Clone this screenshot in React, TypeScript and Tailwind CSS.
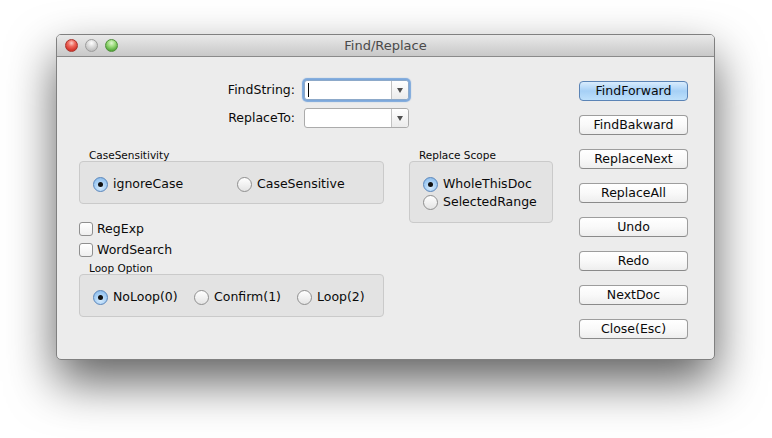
import React from "react"

const font = { fontFamily: '"DejaVu Sans", "Liberation Sans", sans-serif' }

// 창 제목 표시줄의 신호등 버튼
function TrafficLights() {
  return (
    <div className="flex items-center gap-[7px] pl-[8px]">
      <span className="h-[13px] w-[13px] rounded-full border border-[#a8332c] bg-[radial-gradient(circle_at_50%_28%,#fbd0cb_0%,#f06b5f_35%,#d4332a_75%,#e2594f_100%)]" />
      <span className="h-[13px] w-[13px] rounded-full border border-[#9c9c9c] bg-[radial-gradient(circle_at_50%_28%,#ffffff_0%,#dcdcdc_40%,#bdbdbd_80%,#d6d6d6_100%)]" />
      <span className="h-[13px] w-[13px] rounded-full border border-[#4f8f3a] bg-[radial-gradient(circle_at_50%_28%,#e0f6d2_0%,#9bdc7a_38%,#55a83b_78%,#7cc565_100%)]" />
    </div>
  )
}

function ComboBox({ focused = false }: { focused?: boolean }) {
  return (
    <div
      className={
        focused
          ? "flex h-[20px] w-[105px] rounded-[3px] border border-[#8da9c9] bg-white shadow-[0_0_1px_2px_rgba(95,150,215,0.8)]"
          : "flex h-[20px] w-[105px] rounded-[3px] border border-[#ababab] bg-white"
      }
    >
      <div className="flex flex-1 items-center pl-[3px]">
        {focused && <span className="h-[14px] w-px bg-black" />}
      </div>
      <div className="flex w-[17px] items-center justify-center rounded-r-[3px] border-l border-[#c2c2c2] bg-gradient-to-b from-[#ffffff] to-[#ebebeb]">
        <span className="h-0 w-0 border-x-[3.5px] border-t-[5px] border-x-transparent border-t-[#505050]" />
      </div>
    </div>
  )
}

function Radio({ checked = false, label }: { checked?: boolean; label: string }) {
  return (
    <div className="flex h-[15px] items-center gap-[5px]">
      <span
        className={
          checked
            ? "flex h-[15px] w-[15px] items-center justify-center rounded-full border border-[#5a86bb] bg-[radial-gradient(circle_at_50%_70%,#d8ecfd_0%,#a4cdf3_55%,#7fb3e6_100%)]"
            : "h-[15px] w-[15px] rounded-full border border-[#8f8f8f] bg-gradient-to-b from-[#ffffff] to-[#e4e4e4]"
        }
      >
        {checked && <span className="h-[5px] w-[5px] rounded-full bg-[#111]" />}
      </span>
      <span className="text-[12.5px] leading-none text-[#0a0a0a]">{label}</span>
    </div>
  )
}

function CheckBox({ label }: { label: string }) {
  return (
    <div className="flex h-[14px] items-center gap-[4px]">
      <span className="h-[14px] w-[14px] rounded-[3px] border border-[#8f8f8f] bg-gradient-to-b from-[#ffffff] to-[#efefef]" />
      <span className="text-[12.5px] leading-none text-[#0a0a0a]">{label}</span>
    </div>
  )
}

function GroupLabel({ children }: { children: React.ReactNode }) {
  return <p className="h-[13px] pl-[10px] text-[10.5px] leading-[14px] text-[#0a0a0a]">{children}</p>
}

const buttons = ["FindBakward", "ReplaceNext", "ReplaceAll", "Undo", "Redo", "NextDoc", "Close(Esc)"]

export default function App() {
  return (
    <div className="h-[438px] w-[772px] bg-white pl-[56px] pt-[34px]" style={font}>
      <div className="flex h-[326px] w-[659px] flex-col overflow-hidden rounded-[5px] border border-[#808080] bg-[#ececec] shadow-[0_22px_48px_rgba(0,0,0,0.62)]">
        {/* 제목 표시줄 */}
        <div className="relative flex h-[22px] shrink-0 items-center border-b border-[#8a8a8a] bg-gradient-to-b from-[#e9e9e9] to-[#c8c8c8]">
          <TrafficLights />
          <span className="absolute inset-x-0 text-center text-[13px] leading-[22px] text-[#4a4a4a]">Find/Replace</span>
        </div>

        <div className="flex flex-1">
          {/* 왼쪽: 입력칸과 옵션 */}
          <div className="w-[522px] pt-[23px]">
            <div className="flex w-[352px] flex-col items-end gap-[8px]">
              <div className="flex h-[20px] items-center">
                <span className="mr-[9px] text-[12.5px] text-[#0a0a0a]">FindString:</span>
                <ComboBox focused />
              </div>
              <div className="flex h-[20px] items-center">
                <span className="mr-[9px] text-[12.5px] text-[#0a0a0a]">ReplaceTo:</span>
                <ComboBox />
              </div>
            </div>

            <div className="ml-[22px] mt-[20px] flex gap-[25px]">
              <div className="w-[305px]">
                <GroupLabel>CaseSensitivity</GroupLabel>
                <div className="flex h-[43px] items-start rounded-[4px] border border-[#cacaca] bg-[#e3e3e3] pl-[13px] pt-[15px]">
                  <div className="w-[144px]">
                    <Radio checked label="ignoreCase" />
                  </div>
                  <Radio label="CaseSensitive" />
                </div>

                <div className="mt-[18px]">
                  <CheckBox label="RegExp" />
                </div>
                <div className="mt-[7px]">
                  <CheckBox label="WordSearch" />
                </div>

                <div className="mt-[4px]">
                  <GroupLabel>Loop Option</GroupLabel>
                </div>
                <div className="flex h-[43px] items-start rounded-[4px] border border-[#cacaca] bg-[#e3e3e3] pl-[13px] pt-[15px]">
                  <div className="w-[101px]">
                    <Radio checked label="NoLoop(0)" />
                  </div>
                  <div className="w-[103px]">
                    <Radio label="Confirm(1)" />
                  </div>
                  <Radio label="Loop(2)" />
                </div>
              </div>

              <div className="w-[144px]">
                <GroupLabel>Replace Scope</GroupLabel>
                <div className="flex h-[62px] flex-col gap-[3px] rounded-[4px] border border-[#cacaca] bg-[#e3e3e3] pl-[13px] pt-[15px]">
                  <Radio checked label="WholeThisDoc" />
                  <Radio label="SelectedRange" />
                </div>
              </div>
            </div>
          </div>

          {/* 오른쪽: 명령 버튼 */}
          <div className="flex flex-col gap-[14px] pt-[24px]">
            <button
              type="button"
              className="h-[20px] w-[109px] rounded-[4px] border border-[#5b84b6] bg-gradient-to-b from-[#d9ecfd] via-[#a6d0f6] to-[#bde0fb] text-[12.5px] leading-none text-[#0a0a0a]"
            >
              FindForward
            </button>
            {buttons.map((b) => (
              <button
                key={b}
                type="button"
                className="h-[20px] w-[109px] rounded-[4px] border border-[#9d9d9d] border-b-[#8a8a8a] bg-gradient-to-b from-[#ffffff] via-[#f9f9f9] to-[#eeeeee] text-[12.5px] leading-none text-[#0a0a0a]"
              >
                {b}
              </button>
            ))}
          </div>
        </div>
      </div>
    </div>
  )
}
